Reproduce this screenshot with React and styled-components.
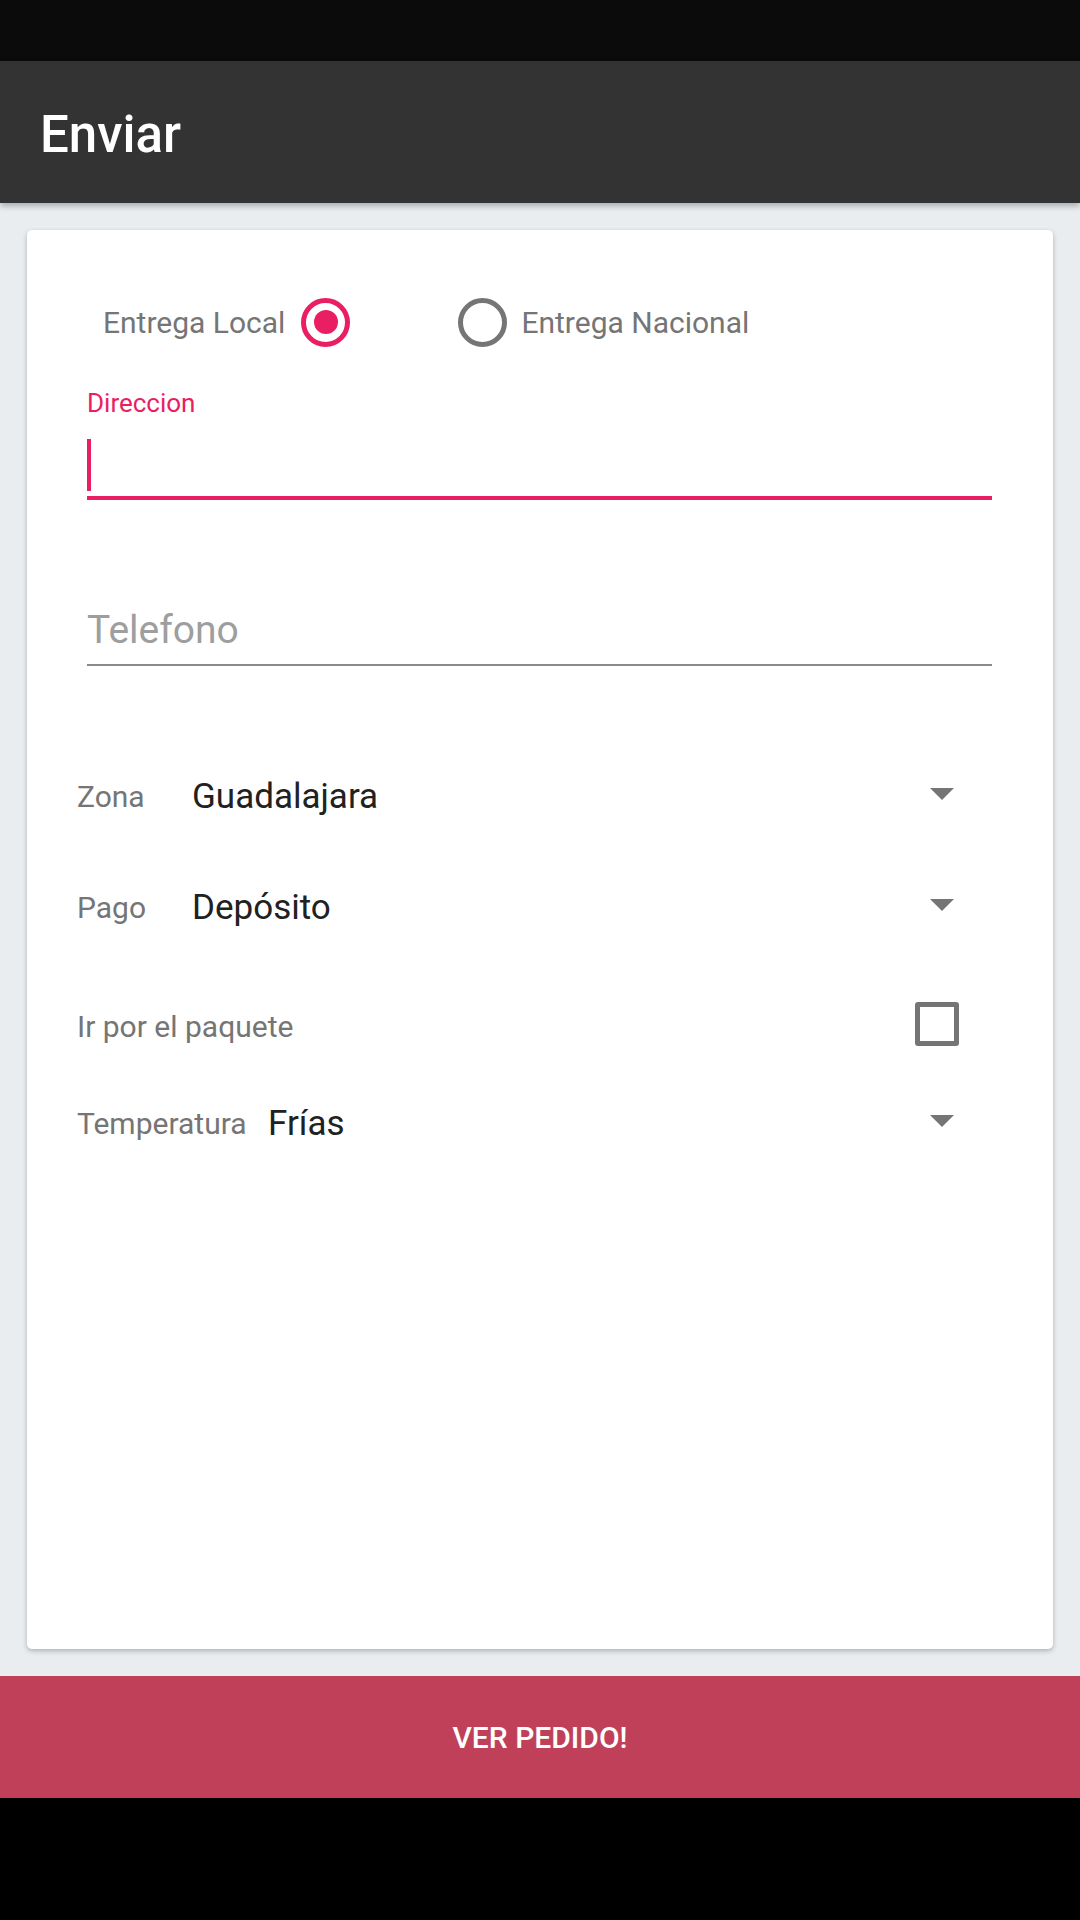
import styled, { createGlobalStyle } from "styled-components";

const GlobalStyle = createGlobalStyle`
  html, body {
    margin: 0;
    padding: 0;
    background: #000;
  }
  * {
    box-sizing: border-box;
  }
`;

const App = () => {
  return (
    <>
      <GlobalStyle />
      <Screen>
        <StatusBar />
        <AppBar>
          <Title>Enviar</Title>
        </AppBar>

        <Content>
          <Card>
            {/* tipo de entrega */}
            <RadioRow>
              <RadioOption>
                <RadioText>Entrega Local</RadioText>
                <Radio $checked />
              </RadioOption>
              <RadioOption $gap={14}>
                <Radio />
                <RadioText>Entrega Nacional</RadioText>
              </RadioOption>
            </RadioRow>

            <Field $mt={42}>
              <FloatLabel>Direccion</FloatLabel>
              <InputBox $focused>
                <Cursor />
              </InputBox>
            </Field>

            <Field $mt={86}>
              <InputBox>
                <Hint>Telefono</Hint>
              </InputBox>
            </Field>

            <Row $mt={85}>
              <RowLabel $w={115}>Zona</RowLabel>
              <Value>Guadalajara</Value>
              <Arrow />
            </Row>

            <Row $mt={21}>
              <RowLabel $w={115}>Pago</RowLabel>
              <Value>Depósito</Value>
              <Arrow />
            </Row>

            <Row $mt={29} $pr={94}>
              <RowLabel>Ir por el paquete</RowLabel>
              <Spacer />
              <Checkbox />
            </Row>

            <Row $mt={7}>
              <RowLabel $w={191}>Temperatura</RowLabel>
              <Value>Frías</Value>
              <Arrow />
            </Row>
          </Card>
        </Content>

        <BottomBtn>VER PEDIDO!</BottomBtn>
        <NavBar />
      </Screen>
    </>
  );
};

export default App;

const Screen = styled.div`
  width: 1080px;
  height: 1920px;
  display: flex;
  flex-direction: column;
  background: #e9edf0;
  font-family: Roboto, "Noto Sans", "Liberation Sans", sans-serif;
  overflow: hidden;
`;

const StatusBar = styled.div`
  height: 61px;
  background: #0b0b0b;
`;

const AppBar = styled.header`
  height: 142px;
  background: #333333;
  display: flex;
  align-items: center;
  padding-left: 40px;
  box-shadow: 0 3px 6px rgba(0, 0, 0, 0.28);
  position: relative;
  z-index: 1;
`;

const Title = styled.h1`
  margin: 0;
  color: #fff;
  font-size: 51px;
  font-weight: 500;
  padding-top: 4px;
`;

const Content = styled.main`
  flex: 1;
  padding: 27px;
  display: flex;
`;

// 카드
const Card = styled.section`
  flex: 1;
  background: #fff;
  border-radius: 5px;
  box-shadow: 0 2px 5px rgba(0, 0, 0, 0.25);
  padding-top: 68px;
  display: flex;
  flex-direction: column;
`;

const RadioRow = styled.div`
  height: 48px;
  display: flex;
  align-items: center;
  padding-left: 76px;
  gap: 108px;
`;

const RadioOption = styled.label`
  display: flex;
  align-items: center;
  gap: ${(p) => p.$gap ?? 16}px;
`;

const RadioText = styled.span`
  font-size: 30px;
  color: #757575;
`;

const Radio = styled.span`
  width: 49px;
  height: 49px;
  border-radius: 50%;
  border: 5px solid ${(p) => (p.$checked ? "#e91e63" : "#757575")};
  display: flex;
  align-items: center;
  justify-content: center;

  &::after {
    content: "";
    display: ${(p) => (p.$checked ? "block" : "none")};
    width: 24px;
    height: 24px;
    border-radius: 50%;
    background: #e91e63;
  }
`;

const Field = styled.div`
  margin: ${(p) => p.$mt}px 61px 0 60px;
  display: flex;
  flex-direction: column;
`;

const FloatLabel = styled.label`
  height: 30px;
  line-height: 30px;
  font-size: 26px;
  color: #e91e63;
`;

const InputBox = styled.div`
  height: ${(p) => (p.$focused ? 82 : 80)}px;
  border-bottom: ${(p) => (p.$focused ? "4px solid #e91e63" : "2px solid #8a8a8a")};
  display: flex;
  align-items: center;
  padding-top: ${(p) => (p.$focused ? 0 : 9)}px;
`;

const Cursor = styled.span`
  width: 4px;
  height: 52px;
  background: #e91e63;
  margin-top: 16px;
`;

const Hint = styled.span`
  font-size: 39px;
  color: #9e9e9e;
`;

const Row = styled.div`
  height: 90px;
  margin-top: ${(p) => p.$mt}px;
  padding: 0 ${(p) => p.$pr ?? 99}px 0 50px;
  display: flex;
  align-items: center;
`;

const RowLabel = styled.span`
  width: ${(p) => (p.$w ? `${p.$w}px` : "auto")};
  font-size: 30px;
  color: #757575;
  flex-shrink: 0;
`;

const Value = styled.span`
  flex: 1;
  font-size: 35px;
  color: #212121;
`;

const Spacer = styled.span`
  flex: 1;
`;

// 드롭다운 화살표
const Arrow = styled.span`
  width: 0;
  height: 0;
  border-left: 12px solid transparent;
  border-right: 12px solid transparent;
  border-top: 12px solid #757575;
  margin-top: -4px;
`;

const Checkbox = styled.span`
  width: 44px;
  height: 44px;
  border: 5px solid #757575;
  border-radius: 3px;
  margin-top: -4px;
`;

const BottomBtn = styled.button`
  height: 122px;
  border: none;
  background: #c0405a;
  color: #fff;
  font-family: Roboto, "Noto Sans", "Liberation Sans", sans-serif;
  font-size: 30px;
  font-weight: 500;
  cursor: pointer;
`;

const NavBar = styled.div`
  height: 122px;
  background: #000;
`;
